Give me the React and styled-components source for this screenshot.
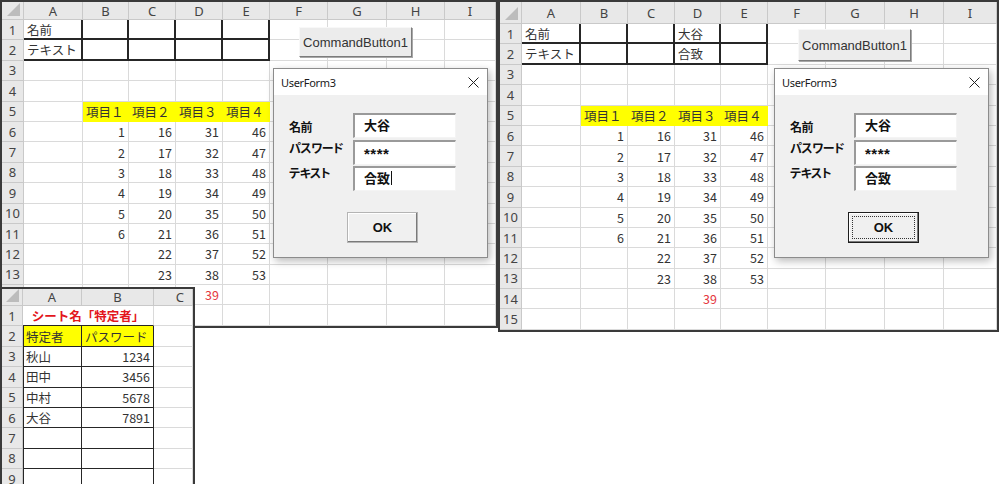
import styled, { createGlobalStyle, css } from 'styled-components';

const GlobalStyle = createGlobalStyle`
  * { box-sizing: border-box; }
  html, body { margin: 0; padding: 0; background: #fff; }
  body { font-family: "Noto Sans CJK JP", "Noto Sans", sans-serif; }
`;

const Canvas = styled.div`
  position: relative;
  width: 999px;
  height: 484px;
  overflow: hidden;
  background: #fff;
`;

const Window = styled.div`
  position: absolute;
  left: ${({ $x }) => $x}px;
  top: ${({ $y }) => $y}px;
  border: 2px solid #3a3a3a;
  background: #fff;
  overflow: hidden;
`;

const Grid = styled.div`
  display: grid;
  grid-template-columns: ${({ $cols }) => $cols};
  grid-template-rows: ${({ $rows }) => $rows};
`;

const HeadCell = styled.div`
  background: #e8e8e8;
  border-right: 1px solid #c9c9c9;
  border-bottom: 1px solid #c9c9c9;
  color: #444;
  font: 13px "Noto Sans", sans-serif;
  display: flex;
  align-items: center;
  justify-content: ${({ $align }) => ($align === 'right' ? 'flex-end' : 'center')};
  padding: ${({ $align }) => ($align === 'right' ? '0 8px 0 0' : '0')};
`;

const Corner = styled(HeadCell)`
  position: relative;
  &::after {
    content: '';
    position: absolute;
    right: 3px;
    bottom: 3px;
    border-left: 13px solid transparent;
    border-bottom: 13px solid #bcbcbc;
  }
`;

const Cell = styled.div`
  grid-column: span ${({ $span }) => $span || 1};
  background: ${({ $fill }) => $fill || '#fff'};
  border-right: 1px solid ${({ $fill }) => $fill || '#dadada'};
  border-bottom: 1px solid ${({ $fill }) => $fill || '#dadada'};
  color: ${({ $color }) => $color || '#333'};
  font-size: 12.5px;
  font-weight: ${({ $bold }) => ($bold ? 700 : 400)};
  display: flex;
  align-items: center;
  justify-content: ${({ $align }) =>
    $align === 'right' ? 'flex-end' : $align === 'center' ? 'center' : 'flex-start'};
  padding: 0 3px;
  white-space: nowrap;
  overflow: hidden;
  ${({ $edge }) =>
    $edge &&
    css`
      border-right: ${$edge}px solid #262626;
      border-bottom: ${$edge}px solid #262626;
    `}
  ${({ $under }) =>
    $under &&
    css`
      border-bottom: ${$under}px solid #262626;
    `}
  ${({ $lead }) =>
    $lead &&
    css`
      box-shadow: inset 1px 0 0 #262626;
    `}
`;

/* ---- VBA form parts ---- */

const Form = styled.div`
  position: absolute;
  left: ${({ $x }) => $x}px;
  top: ${({ $y }) => $y}px;
  width: 215px;
  height: 190px;
  background: #f0f0f0;
  border: 1px solid #8c8c8c;
  box-shadow: 2px 3px 8px rgba(0, 0, 0, 0.28);
  display: flex;
  flex-direction: column;
`;

const TitleBar = styled.div`
  height: 26px;
  background: #fff;
  display: flex;
  align-items: center;
  justify-content: space-between;
  padding: 0 8px 0 7px;
  font: 11px "Noto Sans", sans-serif;
  color: #1a1a1a;
  letter-spacing: -0.3px;
`;

const FormBody = styled.div`
  display: grid;
  grid-template-columns: 64px 103px;
  grid-auto-rows: 25px;
  row-gap: 1.5px;
  padding: 18px 0 0 15px;
`;

const Label = styled.div`
  align-self: start;
  margin-top: ${({ $dy }) => $dy}px;
  line-height: 16px;
  font-size: 12px;
  font-weight: 700;
  font-feature-settings: "palt";
  letter-spacing: -0.5px;
  color: #111;
  white-space: nowrap;
`;

const TextBox = styled.div`
  background: #fff;
  border-top: 2px solid #9a9a9a;
  border-left: 2px solid #9a9a9a;
  border-right: 1px solid #f4f4f4;
  border-bottom: 1px solid #f4f4f4;
  display: flex;
  align-items: center;
  padding: 0 0 3px 9px;
  font-size: 13px;
  font-weight: 700;
  color: #111;
`;

const Mask = styled.span`
  font: 700 15px "Liberation Sans", sans-serif;
  letter-spacing: 0.5px;
  padding-top: 5px;
`;

const Caret = styled.span`
  display: inline-block;
  width: 1px;
  height: 14px;
  margin-left: 1px;
  background: #111;
`;

const FormFooter = styled.div`
  padding: 21px 0 0 73px;
`;

const OkButton = styled.div`
  position: relative;
  width: 71px;
  height: 31px;
  display: flex;
  align-items: center;
  justify-content: center;
  background: #f0f0f0;
  font: 700 13px "Liberation Sans", sans-serif;
  color: #111;
  border: 1px solid ${({ $default }) => ($default ? '#1e1e1e' : '#b4b4b4')};
  box-shadow: inset -1px -1px 0 #7a7a7a, inset 1px 1px 0 #fff;
  ${({ $default }) =>
    $default &&
    css`
      &::after {
        content: '';
        position: absolute;
        inset: 3px;
        border: 1px dotted #333;
      }
    `}
`;

const CommandButton = styled.div`
  position: absolute;
  left: ${({ $x }) => $x}px;
  top: ${({ $y }) => $y}px;
  width: 113px;
  height: ${({ $h }) => $h}px;
  display: flex;
  align-items: center;
  justify-content: center;
  background: #ececec;
  border: 1px solid;
  border-color: #f8f8f8 #7c7c7c #7c7c7c #f8f8f8;
  box-shadow: 1px 1px 0 #a8a8a8;
  font: 13px "Liberation Sans", sans-serif;
  color: #333;
  white-space: nowrap;
`;

function CloseIcon() {
  return (
    <svg width="11" height="11" viewBox="0 0 11 11">
      <path d="M0.5 0.5 L10.5 10.5 M10.5 0.5 L0.5 10.5" stroke="#222" strokeWidth="1" />
    </svg>
  );
}

const fields = [
  { label: '名前', value: '大谷', dy: 6 },
  { label: 'パスワード', value: '****', dy: 0, masked: true },
  { label: 'テキスト', value: '合致', dy: -1 },
];

function UserForm({ x, y, caret, focused }) {
  return (
    <Form $x={x} $y={y}>
      <TitleBar>
        <span>UserForm3</span>
        <CloseIcon />
      </TitleBar>
      <FormBody>
        {fields.map((f, i) => [
          <Label key={'l' + i} $dy={f.dy}>{f.label}</Label>,
          <TextBox key={'t' + i}>
            {f.masked ? <Mask>{f.value}</Mask> : f.value}
            {caret && i === 2 && <Caret />}
          </TextBox>,
        ])}
      </FormBody>
      <FormFooter>
        <OkButton $default={focused}>OK</OkButton>
      </FormFooter>
    </Form>
  );
}

/* ---- sheet ---- */

function Sheet({ x, y, cols, rows, headH, rowH, cells, hideRowNums = 0, children }) {
  const colTemplate = cols.map(([, w]) => `${w}px`).join(' ');
  const rowTemplate = `${headH}px repeat(${rows}, ${rowH}px)`;
  const out = [];

  cols.forEach(([name, , align], i) =>
    out.push(i === 0 ? <Corner key="corner" /> : <HeadCell key={name} $align={align}>{name}</HeadCell>)
  );

  for (let r = 1; r <= rows; r++) {
    // row numbers under the pasted sheet on top are never seen
    out.push(<HeadCell key={'r' + r}>{r > rows - hideRowNums ? '' : r}</HeadCell>);
    let skip = 0;
    cols.slice(1).forEach(([name]) => {
      if (skip > 0) {
        skip--;
        return;
      }
      const c = cells[name + r] || {};
      if (c.span) skip = c.span - 1;
      out.push(
        <Cell
          key={name + r}
          $span={c.span}
          $align={c.align}
          $fill={c.fill}
          $color={c.color}
          $bold={c.bold}
          $edge={c.edge}
          $under={c.under}
          $lead={c.lead}
        >
          {c.v}
        </Cell>
      );
    });
  }

  return (
    <Window $x={x} $y={y}>
      <Grid $cols={colTemplate} $rows={rowTemplate}>{out}</Grid>
      {children}
    </Window>
  );
}

const num = (v, color) => ({ v, align: 'right', color });

function mainCells(d1, d2) {
  const c = {};
  c.A1 = { v: '名前' };
  c.A2 = { v: 'テキスト' };
  if (d1) c.D1 = { v: d1 };
  if (d2) c.D2 = { v: d2 };
  ['B', 'C', 'D', 'E'].forEach((col, i) => {
    c[col + '5'] = { v: '項目' + '１２３４'[i], fill: '#ffff00' };
  });
  for (let i = 0; i < 6; i++) c['B' + (6 + i)] = num(1 + i);
  for (let i = 0; i < 8; i++) {
    c['C' + (6 + i)] = num(16 + i);
    c['D' + (6 + i)] = num(31 + i);
    c['E' + (6 + i)] = num(46 + i);
  }
  c.D14 = num(39, '#e5393f');
  ['A', 'B', 'C', 'D', 'E'].forEach((col) =>
    [1, 2].forEach((r) => {
      c[col + r] = { ...(c[col + r] || {}), edge: 2 };
    })
  );
  return c;
}

const users = [
  ['秋山', 1234],
  ['田中', 3456],
  ['中村', 5678],
  ['大谷', 7891],
];

function userCells() {
  const c = {};
  c.A1 = { v: 'シート名「特定者」', span: 2, align: 'center', bold: true, color: '#e3161c', under: 1 };
  c.A2 = { v: '特定者', fill: '#ffff00' };
  c.B2 = { v: 'パスワード', fill: '#ffff00' };
  users.forEach(([name, pw], i) => {
    c['A' + (3 + i)] = { v: name };
    c['B' + (3 + i)] = num(pw);
  });
  for (let r = 2; r <= 9; r++) {
    c['A' + r] = { ...(c['A' + r] || {}), edge: 1, lead: true };
    c['B' + r] = { ...(c['B' + r] || {}), edge: 1 };
  }
  return c;
}

const leftCols = [
  ['', 22], ['A', 59], ['B', 46], ['C', 47], ['D', 47], ['E', 47],
  ['F', 58], ['G', 59], ['H', 58], ['I', 51],
];

const rightCols = [
  ['', 22], ['A', 59], ['B', 47], ['C', 47], ['D', 46], ['E', 47],
  ['F', 58], ['G', 59], ['H', 59], ['I', 53],
];

const userCols = [['', 21], ['A', 59], ['B', 72], ['C', 39, 'right']];

export default function App() {
  return (
    <>
      <GlobalStyle />
      <Canvas>
        <Sheet x={0} y={0} cols={leftCols} rows={15} headH={18} rowH={20.4} hideRowNums={2} cells={mainCells()}>
          <CommandButton $x={297} $y={25} $h={30}>CommandButton1</CommandButton>
          <UserForm x={271} y={66} caret />
        </Sheet>

        <Sheet x={498} y={0} cols={rightCols} rows={15} headH={22} rowH={20.4} cells={mainCells('大谷', '合致')}>
          <CommandButton $x={298} $y={27} $h={32}>CommandButton1</CommandButton>
          <UserForm x={274} y={66} focused />
        </Sheet>

        <Sheet x={0} y={287} cols={userCols} rows={9} headH={17} rowH={20.4} cells={userCells()} />
      </Canvas>
    </>
  );
}
